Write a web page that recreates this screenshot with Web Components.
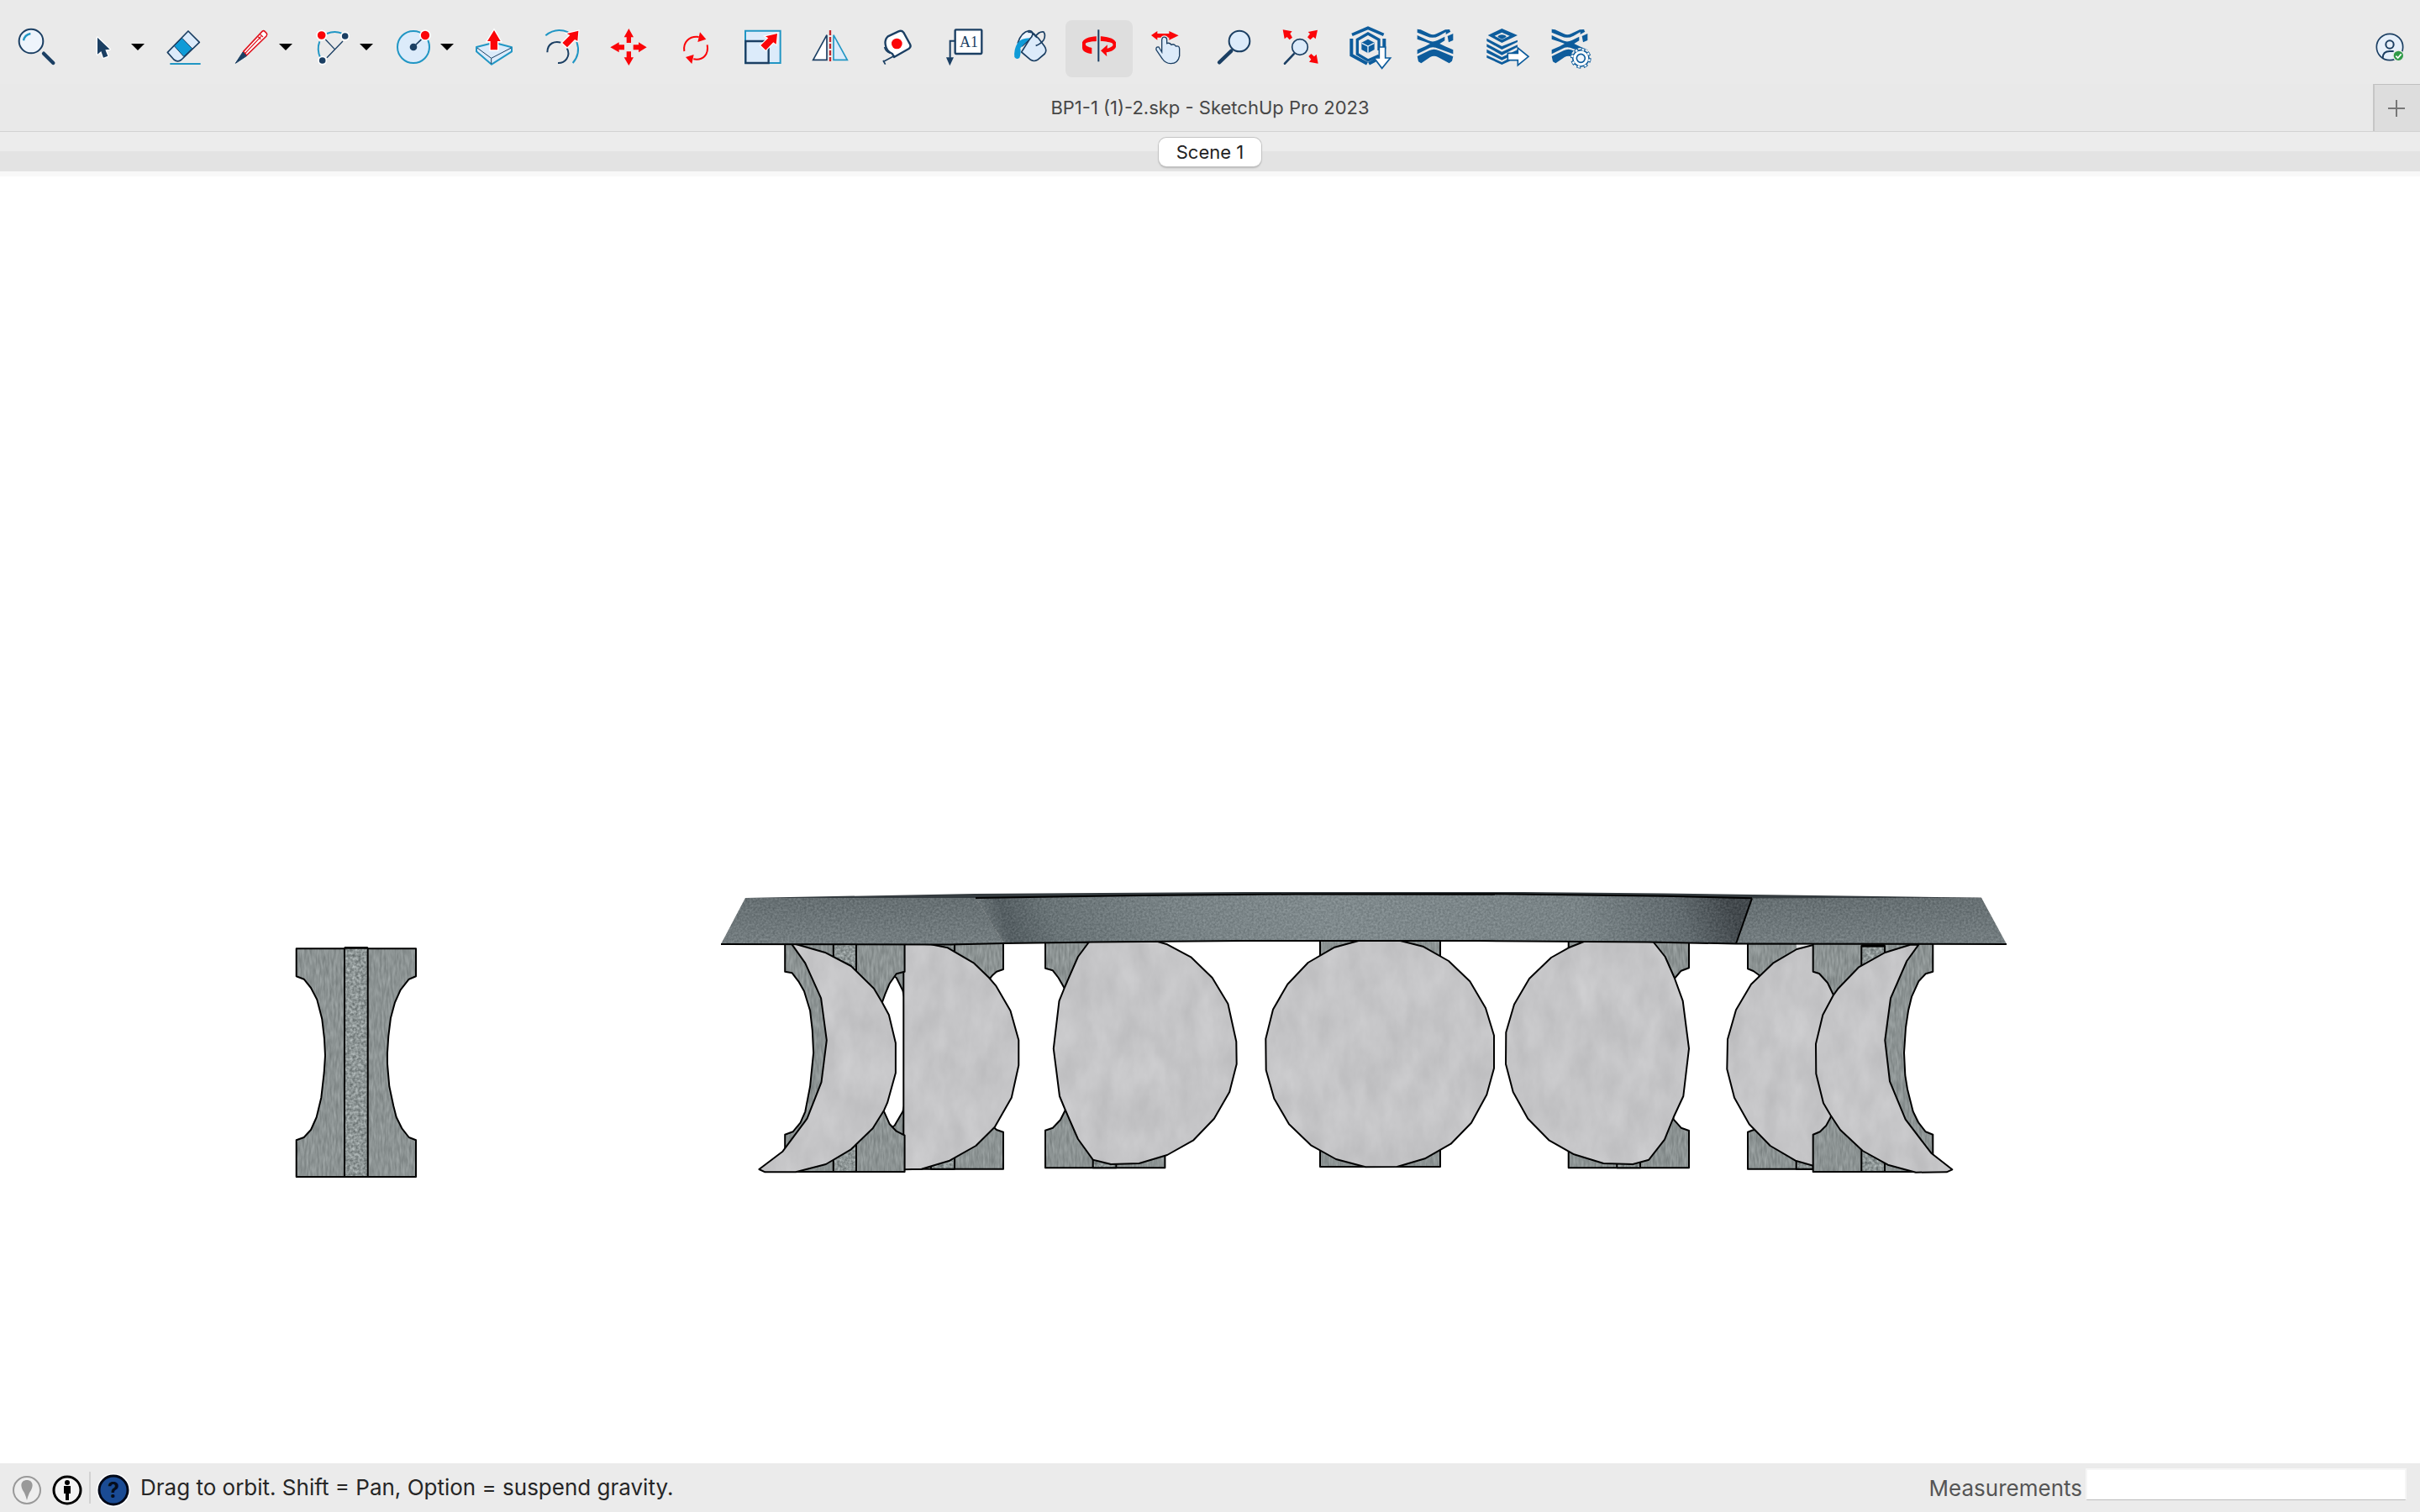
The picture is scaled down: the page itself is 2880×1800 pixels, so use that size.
<!DOCTYPE html>
<html lang="en">
<head>
<meta charset="utf-8">
<title>BP1-1 (1)-2.skp - SketchUp Pro 2023</title>
<style>
  html, body { margin: 0; height: 100%; background: #fff; }
  body { font-family: Inter, "Liberation Sans", sans-serif; font-size: 22px; }
</style>
</head>
<body>
<su-window></su-window>
<script>
/* Toolbar glyphs. Each entry: label, viewBox x origin, cell width (px), markup, optional drop-down. */
const NAVY = '#1b3f63', BLUE = '#2196c4', PALE = '#dcebfa', RED = '#fb0509', SKY = '#0f9bd7', TRIM = '#0d5c9c';
const STACK = (x) => `<g fill="${TRIM}" transform="translate(${x} 0)">
  <path d="M0 104 12 106 44 121Q56 127 68 121L100 106 118 105 78 128Q56 140 34 130L0 116z"/>
  <path d="M0 126 40 145Q56 152 72 144L98 131V145L80 156 100 166 128 178V193L66 170Q56 167 46 170L0 193V178L28 166 46 156 28 149 0 140z"/>
  <path d="M0 201 42 181Q60 172 78 181L128 202 124 218 114 226 74 204Q60 197 46 204L14 226 4 220z"/>
  <path d="M102 112l12-7 5 8-17 10zM108 129l20-9v24l-16 7z"/></g>`;
const TOOLS = [
  ['Search', 12, 80, `<circle cx="111" cy="147" r="43" fill="#eef4fb" stroke="${NAVY}" stroke-width="6"/><path d="M84 145Q88 124 109 120" fill="none" stroke="${BLUE}" stroke-width="7"/><path d="M156 191 190 225" stroke="${NAVY}" stroke-width="13" stroke-linecap="round"/>`],
  ['Select', 252, 64, `<path d="M348 134V194L361 183 369 206 385 200 376 178 392 176z" fill="${NAVY}" stroke="#fff" stroke-width="8" paint-order="stroke" stroke-linejoin="round"/>`, 1],
  ['Eraser', 540, 80, `<g stroke="${NAVY}" stroke-width="5" stroke-linejoin="round"><path d="M672 111 712 151 648 213Q635 224 621 213L598 187z" fill="${PALE}"/><path d="M650 136 686 173 656 202 622 164z" fill="${SKY}" stroke-width="3"/></g><path d="M607 228H716" stroke="${BLUE}" stroke-width="6"/>`],
  ['Line', 780, 64, `<path d="M869 184 936 112Q941 108 946 113L952 119Q955 124 951 129L880 198z" fill="#fff" stroke="#e01520" stroke-width="5"/><path d="M872 194 932 130M922 131 931 140M929 123 939 132" stroke="#e01520" stroke-width="4" fill="none"/><path d="M867 186 880 200 841 226z" fill="${NAVY}" stroke="${NAVY}" stroke-width="3"/>`, 1],
  ['Arc', 1068, 64, `<path d="M1144 207Q1130 178 1141 148M1167 120Q1195 108 1220 119" fill="none" stroke="${BLUE}" stroke-width="6"/><path d="M1162 141 1195 176M1167 206 1224 147" stroke="${NAVY}" stroke-width="4"/><g stroke="#fff" stroke-width="5"><circle cx="1148" cy="126" r="17" fill="${RED}"/><circle cx="1232" cy="129" r="14" fill="${NAVY}"/><circle cx="1151" cy="216" r="14" fill="${NAVY}"/></g>`, 1],
  ['Circle', -24, 64, `<circle cx="96" cy="168" r="57" fill="${PALE}" stroke="${BLUE}" stroke-width="6"/><path d="M96 168 126 139" stroke="${NAVY}" stroke-width="5"/><circle cx="96" cy="168" r="13" fill="${NAVY}"/><circle cx="138" cy="126" r="18" fill="${RED}" stroke="#fff" stroke-width="5"/>`, 1],
  ['Push/Pull', 264, 80, `<path d="M321 168 384 152 447 169V184L375 230 321 184z" fill="${PALE}" stroke="${BLUE}" stroke-width="6" stroke-linejoin="round"/><path d="M324 171 374 208 445 171M374 208V228" fill="none" stroke="${NAVY}" stroke-width="3"/><path d="M384 108 407 147H396V178H371V147H360z" fill="${RED}" stroke="#fff" stroke-width="8" paint-order="stroke"/>`],
  ['Offset', 504, 80, `<path d="M568 127Q603 97 649 115M679 150Q694 191 665 225" fill="none" stroke="${BLUE}" stroke-width="6"/><path d="M574 187C574 153 602 146 622 152M644 172C660 202 636 226 612 225" fill="none" stroke="${NAVY}" stroke-width="6"/><path d="M685 110 682 146 672 141 645 169 628 153 655 126 644 120z" fill="${RED}" stroke="#fff" stroke-width="7" paint-order="stroke"/>`],
  ['Move', 744, 80, `<g fill="${RED}"><path d="M865 102 882 133H873V153H857V133H848z"/><path d="M865 234 882 205H873V184H857V205H848z"/><path d="M799 169 830 151V160H849V178H830V187z"/><path d="M929 169 900 151V160H881V178H900V187z"/></g>`],
  ['Rotate', 984, 80, `<path d="M1063 183C1058 151 1080 128 1115 132M1145 160C1151 195 1130 217 1096 211" fill="none" stroke="${RED}" stroke-width="6"/><path d="M1119 115 1141 140 1111 150zM1068 204 1097 195 1090 228z" fill="${RED}"/>`],
  ['Scale', 1224, 80, `<path d="M1281 110H1406V225H1281z" fill="${PALE}" stroke="${BLUE}" stroke-width="6"/><path d="M1282 147H1364V225H1282z" fill="${PALE}" stroke="${NAVY}" stroke-width="7"/><path d="M1395 120 1391 158 1381 151 1354 179 1336 162 1363 136 1353 130z" fill="${RED}" stroke="#fff" stroke-width="7" paint-order="stroke"/>`],
  ['Flip', 84, 80, `<path d="M143 214H192V125z" fill="#fff" stroke="${NAVY}" stroke-width="5"/><path d="M216 214H265L216 125z" fill="${PALE}" stroke="${BLUE}" stroke-width="5"/><path d="M204 108V219" stroke="#c1272d" stroke-width="7" stroke-dasharray="18 6"/>`],
  ['Tape Measure', 324, 80, `<path d="M410 130 448 112Q459 107 466 116L489 158Q494 166 486 173L432 204 426 192Q404 184 401 158 398 142 410 130z" fill="#fff" stroke="${NAVY}" stroke-width="7" stroke-linejoin="round"/><circle cx="442" cy="156" r="19" fill="${RED}"/><path d="M398 168Q402 184 418 190M434 199 396 219M393 216 401 230" fill="none" stroke="${NAVY}" stroke-width="5"/>`],
  ['Text', 564, 80, `<rect x="650" y="106" width="95" height="86" rx="3" fill="#fff" stroke="${NAVY}" stroke-width="7"/><text x="699" y="167" text-anchor="middle" font-family="Liberation Serif, serif" font-size="54" fill="${NAVY}">A1</text><path d="M649 146H632V206" fill="none" stroke="${NAVY}" stroke-width="6"/><path d="M618 205H645L631 235z" fill="${NAVY}"/>`],
  ['Paint Bucket', 804, 80, `<path d="M887 186 928 121 948 137 969 165Q979 180 970 192L944 214Q932 221 920 214z" fill="${PALE}" stroke="${NAVY}" stroke-width="5" stroke-linejoin="round"/><path d="M874 153Q887 114 914 110 934 112 923 132 905 152 890 164 880 160 874 153z" fill="#eef5fc" stroke="${NAVY}" stroke-width="5"/><path d="M917 136Q885 136 872 155 859 176 862 204 870 215 880 206 886 192 883 172z" fill="${SKY}"/><path d="M936 132Q948 112 966 114 975 126 966 143 954 158 938 163M910 115Q932 112 942 135" fill="none" stroke="${NAVY}" stroke-width="5"/>`],
  ['Orbit', 1044, 80, `<path d="M1104 151C1112 134 1140 130 1163 130 1192 130 1216 136 1224 151V167C1220 179 1206 184 1190 187L1192 202 1170 181 1194 160 1193 173C1208 170 1220 162 1210 154 1190 145 1135 145 1117 154 1110 163 1128 169 1138 171V192C1118 190 1104 183 1104 170z" fill="${RED}"/><path d="M1162 106V220" stroke="#dedede" stroke-width="15"/><path d="M1162 106V220" stroke="${NAVY}" stroke-width="6"/>`],
  ['Pan', -96, 80, `<path d="M-30 126-8 111V120H34V111L68 127 34 143V134H-8V143z" fill="${RED}"/><path d="M8 186V142Q10 130 20 133 27 135 26 145V155Q36 151 42 160 52 155 58 165 70 162 71 174V200Q66 227 40 227 20 226 10 210L-12 178Q-14 166-3 168z" fill="${PALE}" stroke="#e9e9e9" stroke-width="11" paint-order="stroke"/><path d="M8 186V142Q10 130 20 133 27 135 26 145V155Q36 151 42 160 52 155 58 165 70 162 71 174V200Q66 227 40 227 20 226 10 210L-12 178Q-14 166-3 168z" fill="${PALE}" stroke="${NAVY}" stroke-width="4"/>`],
  ['Zoom', 144, 80, `<circle cx="285" cy="147" r="37" fill="${PALE}" stroke="${NAVY}" stroke-width="6"/><path d="M256 182 213 223" stroke="${NAVY}" stroke-width="13" stroke-linecap="round"/>`],
  ['Zoom Extents', 384, 80, `<circle cx="501" cy="168" r="28" fill="${PALE}" stroke="${NAVY}" stroke-width="5"/><path d="M479 193 447 227" stroke="${NAVY}" stroke-width="8" stroke-linecap="round"/><path d="M440 106 473 112 466 120 474 134 464 142 455 132 446 139zM564 107 530 114 537 121 528 133 538 142 549 132 557 139zM566 227 560 194 552 202 541 192 532 201 541 212 534 221z" fill="${RED}"/>`],
  ['3D Warehouse', 624, 80, `<g fill="none" stroke="${TRIM}"><path d="M687 124 744 100 800 124" stroke-width="11"/><path d="M685 138V197L741 227M802 138V175M747 227 770 215" stroke-width="12"/><path d="M783 199 744 216 706 193V142L744 120 783 142V180" stroke-width="10"/></g><path d="M744 140 767 152V177L744 190 721 177V152z" fill="${TRIM}"/><path d="M722 154 744 165 766 154M744 165V190" fill="none" stroke="#eaf3fb" stroke-width="4"/><path d="M784 168H806V207H824L794 244 766 207H784z" fill="#fff" stroke="${TRIM}" stroke-width="5"/>`],
  ['Extension Warehouse', 864, 80, STACK(920)],
  ['Send to LayOut', 1104, 80, `<g fill="${TRIM}"><path d="M1222 102 1278 126 1222 153 1172 126zM1222 116 1196 128 1222 142 1250 128z" fill-rule="evenodd"/><path d="M1222 124Q1236 124 1238 132L1222 140 1207 132Q1210 124 1222 124z"/><path d="M1168 137 1222 165 1278 143V150L1222 177 1168 147z"/><path d="M1168 157 1222 185 1278 160V168L1222 197 1168 167z"/><path d="M1168 176 1222 204 1278 178V188L1222 215 1168 188z"/><path d="M1168 197 1222 222 1250 208V218L1222 231 1168 206z"/></g><path d="M1243 190H1279V171L1317 202 1279 233V215H1243z" fill="#fff" stroke="${TRIM}" stroke-width="5"/>`],
  ['Extension Manager', 1344, 80, STACK(1400) + `<circle cx="1504" cy="208" r="37" fill="#e9e9e9"/><circle cx="1504" cy="208" r="31" fill="none" stroke="${TRIM}" stroke-width="12" stroke-dasharray="14 10.35"/><circle cx="1504" cy="208" r="29" fill="#fff" stroke="${TRIM}" stroke-width="5"/><circle cx="1504" cy="208" r="31" fill="none" stroke="#fff" stroke-width="7" stroke-dasharray="8 16.35" stroke-dashoffset="-3"/><circle cx="1504" cy="208" r="15" fill="#eef5fc" stroke="${TRIM}" stroke-width="5"/>`],
];

class SuTool extends HTMLElement {
  connectedCallback() {
    const [label, x, w, art, menu] = TOOLS[this.getAttribute('index')];
    const on = this.hasAttribute('active');
    this.attachShadow({ mode: 'open' }).innerHTML = `
      <style>
        :host { display: flex; flex: none; }
        button { border: 0; padding: 0; margin: 0; background: none; border-radius: 8px; height: 68px; display: block; }
        button.on { background: #dedede; }
        svg { display: block; height: 68px; }
      </style>
      <button class="${on ? 'on' : ''}" aria-label="${label}" aria-pressed="${on}">
        <svg width="${w}" viewBox="${x} 72 ${w * 3} 204" aria-hidden="true">${art}</svg>
      </button>
      ${menu ? `<button aria-label="${label} menu"><svg width="32" viewBox="0 0 96 204" aria-hidden="true"><path d="M24 84H72L48 108z"/></svg></button>` : ''}`;
  }
}

class SuToolbar extends HTMLElement {
  constructor() {
    super();
    this.attachShadow({ mode: 'open' }).innerHTML = `
      <style>
        :host { display: flex; padding: 24px 0 8px 4px; background: #eaeaea; }
        .account { margin-left: auto; border: 0; padding: 0; background: none; height: 68px; }
        svg { display: block; }
      </style>
      ${TOOLS.map((t, i) => `<su-tool index="${i}"${t[0] === 'Orbit' ? ' active' : ''}></su-tool>`).join('')}
      <button class="account" aria-label="Account">
        <svg width="72" height="68" viewBox="504 72 216 204" aria-hidden="true">
          <circle cx="612" cy="168" r="47" fill="#e6f0fa" stroke="${NAVY}" stroke-width="5"/>
          <circle cx="612" cy="159" r="14" fill="none" stroke="${NAVY}" stroke-width="6"/>
          <path d="M587 207C587 190 598 183 612 183H626" fill="none" stroke="${NAVY}" stroke-width="6"/>
          <circle cx="643" cy="199" r="19" fill="#2f9b48" stroke="#e9e9e9" stroke-width="4"/>
          <path d="M634 200 641 207 653 193" fill="none" stroke="#fff" stroke-width="5"/>
        </svg>
      </button>`;
  }
}

class SuTitlebar extends HTMLElement {
  constructor() {
    super();
    this.attachShadow({ mode: 'open' }).innerHTML = `
      <style>
        :host { display: grid; grid-template-columns: 56px 1fr 56px; height: 56px; background: #e9e9e9; border-bottom: 1px solid #d2d2d2; }
        h1 { margin: 0; grid-column: 2; text-align: center; font-size: 22px; line-height: 56px; font-weight: 400; color: #474747; }
        button { border: 0; border-left: 2px solid #c6c6c6; border-top: 1px solid #c0c0c0; padding: 0 2px 0 0; background: #dddddd; display: grid; place-items: center; }
      </style>
      <h1><slot></slot></h1>
      <button aria-label="New tab"><svg width="22" height="22" viewBox="0 0 22 22"><path d="M11 1V21M1 11H21" stroke="#777" stroke-width="2"/></svg></button>`;
  }
}

class SuScenes extends HTMLElement {
  constructor() {
    super();
    this.attachShadow({ mode: 'open' }).innerHTML = `
      <style>
        :host { display: flex; justify-content: center; align-items: center; height: 47px; background: linear-gradient(#ececec 23px, #e3e3e3 23px); border-bottom: 6px solid #f8f8f8; }
        button { font: inherit; line-height: 34px; height: 34px; padding: 0 21px; border: 0; border-radius: 9px; background: #fff; color: #222; box-shadow: 0 0 0 1px #c4c4c4, 0 2px 2px #b4b4b4; }
      </style>
      <button aria-pressed="true"><slot></slot></button>`;
  }
}

/* Model geometry, each list of points measured on its own grid (origin and scale). */
const A = [840, 1040, 2.24, 3], B = [1480, 1040, 3, 3], C = [1960, 1040, 3, 3], D = [320, 1100, 3, 3], S = [0, 0, 1, 1];
const at = ([ox, oy, sx, sy], s) => s.trim().split(/\s+/).map(p => {
  const [x, y] = p.split(',').map(Number);
  return (ox + x / sx).toFixed(1) + ',' + (oy + y / sy).toFixed(1);
}).join(' ');
const solid = (kind, grid, s) => { const p = at(grid, s); return `<polygon class="${kind}" points="${p}"/><polygon class="edge" points="${p}"/>`; };
const line = (grid, s) => `<polyline class="edge" points="${at(grid, s)}"/>`;
const strip = (grid, x1, x2, y1, y2) => solid('grain', grid, `${x1},${y1} ${x2},${y1} ${x2},${y2} ${x1},${y2}`);

class SuModelView extends HTMLElement {
  constructor() {
    super();
    /* Grey noise, centred on zero, added to the fill and clipped to its shape. */
    const noise = (id, freq, oct, amp, seed) => `
      <filter id="${id}" x="0" y="0" width="1" height="1" color-interpolation-filters="sRGB">
        <feTurbulence type="fractalNoise" baseFrequency="${freq}" numOctaves="${oct}" seed="${seed}"/>
        <feColorMatrix values="1 0 0 0 0 1 0 0 0 0 1 0 0 0 0 0 0 0 0 1" result="n"/>
        <feComposite in="SourceGraphic" in2="n" operator="arithmetic" k2="1" k3="${amp}" k4="${-amp / 2}" result="t"/>
        <feColorMatrix in="t" values="1 0 0 0 0 0 1 0 0 0 0 0 1 0 0 0 0 0 0 1"/>
        <feComposite in2="SourceGraphic" operator="in"/>
      </filter>`;
    const bottom = '1195,1123 1300,1121.5 1480,1120 1760,1120 1960,1121.5 2066,1123.5';
    const front = '1161,1069 1360,1066 1540,1064.5 1780,1064.3 1980,1066.7 2085,1069.3';
    this.attachShadow({ mode: 'open' }).innerHTML = `
      <style>
        :host { display: block; flex: 1; min-height: 0; background: #fff; }
        svg { display: block; width: 100%; height: 100%; }
        .stone { fill: #8c9393; filter: url(#stone); }
        .grain { fill: #8e9696; filter: url(#grain); }
        .disc { fill: #c5c5c7; filter: url(#plaster); }
        .slab { filter: url(#granite); }
        .edge { fill: none; stroke: #000; stroke-width: 2; stroke-linejoin: round; }
      </style>
      <svg viewBox="0 210 2880 1532" role="img" aria-label="Model">
        <defs>
          ${noise('stone', '.4 .08', 2, .22, 3)}${noise('grain', '.3 .3', 2, .5, 8)}
          ${noise('plaster', '.04 .02', 4, .09, 5)}${noise('granite', '.4 .4', 2, .2, 2)}
          <linearGradient id="front" gradientUnits="userSpaceOnUse" x1="1170" y1="1096" x2="2085" y2="1096" gradientTransform="skewX(20) translate(-399 0)">
            <stop offset="0" stop-color="#6d7679"/><stop offset=".03" stop-color="#555e62"/><stop offset=".09" stop-color="#697376"/><stop offset=".25" stop-color="#788285"/><stop offset=".45" stop-color="#808a8d"/><stop offset=".78" stop-color="#798386"/><stop offset=".91" stop-color="#626b6f"/><stop offset=".98" stop-color="#43494d"/>
          </linearGradient>
          <linearGradient id="wing" gradientUnits="userSpaceOnUse" x1="0" y1="1069" x2="0" y2="1124"><stop offset="0" stop-color="#666f72"/><stop offset="1" stop-color="#757e81"/></linearGradient>
        </defs>

        ${solid('stone', D, '98,88 525,88 525,187 500,197 470,235 450,280 435,335 427,400 423,460 423,500 430,580 445,650 455,690 475,730 500,762 525,772 525,903 98,903 98,772 125,762 150,735 170,690 187,620 197,530 201,470 198,410 190,340 172,270 150,228 125,197 98,187')}
        ${strip(D, 270, 353, 86, 903)}${line(D, '270,84 353,84')}

        ${solid('stone', A, '473,248 793,248 793,342 775,350 765,362 757,375 730,450 715,640 730,830 765,903 775,915 793,923 793,1055 473,1055 473,923 503,900 525,850 545,740 545,540 525,418 508,372 473,342')}
        ${strip(A, 600, 663, 248, 1055)}
        ${solid('disc', A, '527,250 600,253 645,265 715,320 755,372 773,400 812,490 834,595 834,685 815,800 770,905 720,972 650,1025 575,1055 527,1057')}
        ${solid('stone', A, '211,248 530,248 530,350 508,358 490,392 478,430 468,468 450,600 455,760 475,850 490,895 508,920 530,935 530,1065 211,1065 211,932 232,922 252,890 265,850 278,760 287,640 284,560 278,490 262,420 247,385 230,355 211,350')}
        ${strip(A, 340, 401, 248, 1065)}
        ${solid('disc', A, '228,250 265,320 307,445 322,595 308,745 270,875 205,992 142,1056 158,1066 240,1066 320,1038 387,985 445,910 475,845 484,818 506,712 506,605 488,505 470,460 448,410 387,330 320,283 240,252')}

        ${solid('stone', A, '905,245 1200,245 1200,900 1224,917 1224,1051 905,1051 905,917 925,908 945,880 960,840 980,640 957,412 940,372 925,346 905,338')}
        ${strip(A, 1032, 1094, 900, 1051)}
        ${solid('disc', A, '1022,243 992,297 957,405 942,455 927,625 943,795 957,840 992,948 1032,1022 1080,1038 1155,1035 1230,1005 1300,952 1355,875 1396,780 1415,680 1414,600 1392,465 1350,372 1293,298 1230,253 1205,243')}

        ${solid('stone', B, '273,240 702,240 702,1047 273,1047')}
        ${solid('disc', B, '410,240 325,263 230,318 157,395 105,485 79,590 80,702 109,803 162,895 240,970 330,1020 435,1048 548,1047 647,1018 740,965 813,890 868,790 894,695 894,578 864,480 808,385 732,312 640,260 560,240')}

        ${solid('stone', B, '1160,240 1590,240 1590,337 1562,347 1538,375 1500,640 1535,878 1562,908 1590,918 1590,1051 1160,1051')}
        ${strip(B, 1333, 1416, 900, 1051)}
        ${solid('disc', B, '1215,243 1160,265 1098,300 1020,375 966,467 937,567 936,680 962,780 1015,875 1090,952 1180,1003 1285,1035 1390,1038 1447,1022 1503,950 1535,870 1570,795 1590,625 1568,455 1538,372 1505,297 1462,243')}

        ${solid('stone', C, '360,250 593,250 593,1055 360,1055 360,923 375,917 383,915 420,800 420,500 400,362 380,348 360,340')}
        ${strip(C, 533, 593, 900, 1055)}<polygon fill="#e4e5e6" points="${at(C, '533,250 593,250 593,256 535,270')}"/>
        ${solid('disc', C, '700,252 593,255 535,270 450,320 372,395 318,487 288,592 286,698 312,800 365,895 440,972 530,1025 593,1043 700,1043')}
        ${solid('stone', C, '593,250 1021,250 1021,350 995,358 970,385 945,440 933,490 924,550 918,640 922,720 930,770 950,850 970,890 995,922 1021,932 1021,1065 593,1065 593,932 618,922 640,900 655,872 690,780 700,650 690,520 665,432 645,390 615,357 593,350')}
        ${strip(C, 766, 849, 258, 1065)}${line(C, '766,260 849,260')}${line(C, '766,256 849,256')}
        ${solid('disc', C, '970,254 928,312 870,445 850,595 867,742 923,878 1015,998 1090,1057 1070,1066 960,1067 860,1040 770,990 690,915 655,862 630,820 604,715 603,608 628,505 665,435 683,410 755,335 850,282 940,254')}

        <polygon fill="#343b3f" points="887,1069 1160,1064 1480,1062 1813,1062 1980,1063.5 2358,1068.7 2358,1070 887,1070"/>
        <polygon class="slab" fill="url(#wing)" points="887,1069 1161,1069 1195,1123 1130,1124 858,1124"/>
        <polygon class="slab" fill="url(#wing)" points="2085,1069.3 2358,1068.7 2388,1124 2066,1123.5"/>
        <polygon class="slab" fill="url(#front)" points="${front} ${bottom.split(' ').reverse().join(' ')}"/>
        ${line(S, front)}${line(S, '2085,1069.3 2066,1123.5')}
        ${line(S, '858,1124 1130,1124.5 ' + bottom + ' 2388,1124')}
      </svg>`;
  }
}

class SuStatusbar extends HTMLElement {
  constructor() {
    super();
    this.attachShadow({ mode: 'open' }).innerHTML = `
      <style>
        :host { display: flex; align-items: center; height: 58px; padding: 0 16px 0 14px; box-sizing: border-box; background: #ebebeb; font-size: 26px; color: #262626; }
        button { border: 0; padding: 0; background: none; display: block; width: 36px; height: 36px; margin-top: 6px; }
        button + button { margin-left: 12px; }
        svg { display: block; overflow: visible; }
        i { width: 2px; height: 38px; background: #d2d2d2; margin: 0 9px 0 8px; }
        p { margin: 0 auto 0 14px; line-height: 58px; }
        label { color: #555; margin-right: 4px; }
        input { width: 382px; height: 38px; box-sizing: border-box; border: 2px solid #f6f6f6; border-bottom: 1px solid #bbb; background: #fff; font: inherit; padding: 0 6px; margin-bottom: 8px; border-radius: 0; }
      </style>
      <button aria-label="Geolocation"><svg width="36" height="36" viewBox="0 0 36 36"><circle cx="18" cy="18" r="16" fill="#eee" stroke="#999" stroke-width="2"/><path d="M18 30Q16 22 13 18C9 10 13 6 18 6s9 4 5 12Q20 22 18 30z" fill="#999"/></svg></button>
      <button aria-label="Credits"><svg width="36" height="36" viewBox="0 0 36 36"><circle cx="18" cy="18" r="16" fill="#f4f4f4" stroke="#000" stroke-width="3"/><circle cx="18" cy="9" r="3"/><path d="M14 13H22V22H20V30H16V22H14z"/></svg></button>
      <i></i>
      <button aria-label="Help"><svg width="36" height="36" viewBox="0 0 36 36"><circle cx="18" cy="18" r="20" fill="#fff"/><circle cx="18" cy="18" r="17" fill="#1a4b94" stroke="#000818" stroke-width="3"/><text x="18" y="27" text-anchor="middle" font-family="Inter, sans-serif" font-weight="700" font-size="25" fill="#050d1c">?</text></svg></button>
      <p><slot></slot></p>
      <label for="m">Measurements</label><input id="m" type="text">`;
  }
}

class SuWindow extends HTMLElement {
  constructor() {
    super();
    this.attachShadow({ mode: 'open' }).innerHTML = `
      <style>:host { display: flex; flex-direction: column; height: 100vh; min-width: 0; }</style>
      <su-toolbar></su-toolbar>
      <su-titlebar>BP1-1 (1)-2.skp - SketchUp Pro 2023</su-titlebar>
      <su-scenes>Scene 1</su-scenes>
      <su-model-view></su-model-view>
      <su-statusbar>Drag to orbit. Shift = Pan, Option = suspend gravity.</su-statusbar>`;
  }
}

customElements.define('su-tool', SuTool);
customElements.define('su-toolbar', SuToolbar);
customElements.define('su-titlebar', SuTitlebar);
customElements.define('su-scenes', SuScenes);
customElements.define('su-model-view', SuModelView);
customElements.define('su-statusbar', SuStatusbar);
customElements.define('su-window', SuWindow);
</script>
</body>
</html>
